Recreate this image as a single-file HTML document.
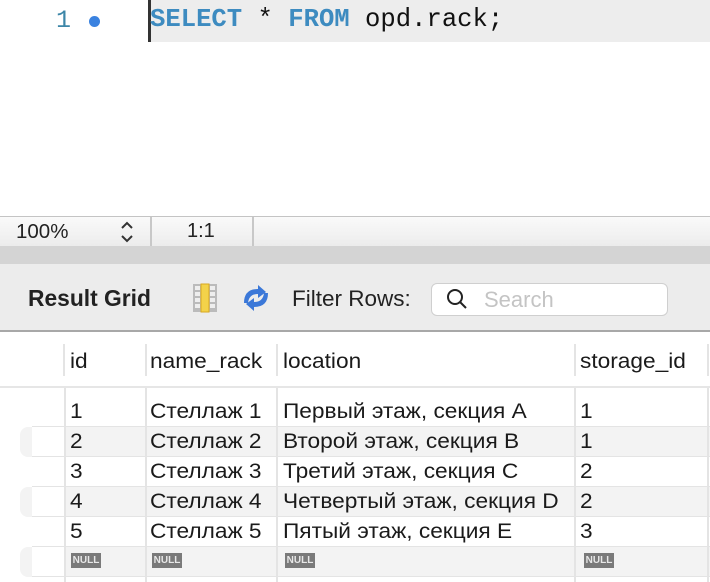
<!DOCTYPE html>
<html><head><meta charset="utf-8"><style>
*{margin:0;padding:0;box-sizing:border-box}
body{width:710px;height:582px;position:relative;background:#fff;overflow:hidden;font-family:"Liberation Sans",sans-serif}
.a{position:absolute}
.mono{font-family:"Liberation Mono",monospace}
.t{position:absolute;font-size:21.5px;color:#1a1a1a;line-height:30px;white-space:nowrap;transform:scaleX(1.055);transform-origin:0 0}
.null{position:absolute;background:#7a7a7a;color:#e8e8e8;font-size:10px;font-weight:bold;width:30px;height:15px;line-height:15px;text-align:center}
</style></head><body>
<div class="a" style="left:150px;top:0;width:560px;height:42px;background:#ededed"></div>
<div class="a" style="left:148px;top:0;width:3px;height:42px;background:#333"></div>
<div class="a mono" style="left:56px;top:6px;font-size:25px;color:#3d86a8">1</div>
<div class="a" style="left:89px;top:16px;width:11px;height:11px;border-radius:50%;background:#3a82e0"></div>
<div class="a mono" style="left:150px;top:5px;font-size:25.6px;white-space:pre;color:#111"><span style="color:#3d8bc0;font-weight:bold">SELECT</span> * <span style="color:#3d8bc0;font-weight:bold">FROM</span> opd.rack;</div>
<div class="a" style="left:0;top:216px;width:710px;height:30px;background:linear-gradient(#fafafa,#ececec);border-top:1px solid #c4c4c4"></div>
<div class="a" style="left:16px;top:220px;font-size:20.5px;color:#222">100%</div>
<svg class="a" style="left:119px;top:220px" width="16" height="24"><path d="M3 8 L8 3 L13 8 M3 16 L8 21 L13 16" fill="none" stroke="#333" stroke-width="2"/></svg>
<div class="a" style="left:150px;top:217px;width:2px;height:29px;background:#c8c8c8"></div>
<div class="a" style="left:187px;top:220px;font-size:20px;color:#222">1:1</div>
<div class="a" style="left:252px;top:217px;width:2px;height:29px;background:#c8c8c8"></div>
<div class="a" style="left:0;top:246px;width:710px;height:18px;background:#d4d4d4"></div>
<div class="a" style="left:0;top:264px;width:710px;height:66px;background:#ececec"></div>
<div class="a" style="left:28px;top:285px;font-size:22.8px;font-weight:bold;color:#222">Result Grid</div>
<svg class="a" style="left:192px;top:283px" width="26" height="30"><rect x="1" y="1" width="24" height="28" fill="#bbb"/><rect x="3" y="3" width="5" height="4" fill="#eee"/><rect x="3" y="9" width="5" height="4" fill="#eee"/><rect x="3" y="15" width="5" height="4" fill="#eee"/><rect x="3" y="21" width="5" height="4" fill="#eee"/><rect x="18" y="3" width="5" height="4" fill="#eee"/><rect x="18" y="9" width="5" height="4" fill="#eee"/><rect x="18" y="15" width="5" height="4" fill="#eee"/><rect x="18" y="21" width="5" height="4" fill="#eee"/><rect x="9" y="1" width="8" height="28" fill="#f3d34a" stroke="#d8a820"/></svg>
<svg class="a" style="left:240px;top:283px" width="32" height="30" viewBox="0 0 32 30"><path d="M4 20 Q4 6 18 6 L18 2 L26 9 L18 15 L18 11 Q9 11 8 20 Z" fill="#3b78d8"/><path d="M28 10 Q28 24 14 24 L14 28 L6 21 L14 15 L14 19 Q23 19 24 10 Z" fill="#3b78d8"/></svg>
<div class="a" style="left:292px;top:286px;font-size:22.5px;color:#222">Filter Rows:</div>
<div class="a" style="left:431px;top:283px;width:237px;height:33px;background:#fff;border:1px solid #cfcfcf;border-radius:6px"></div>
<svg class="a" style="left:446px;top:288px" width="22" height="22"><circle cx="9" cy="9" r="7" fill="none" stroke="#222" stroke-width="2"/><line x1="14" y1="14" x2="20" y2="20" stroke="#222" stroke-width="2"/></svg>
<div class="a" style="left:484px;top:287px;font-size:22px;color:#c4c4c4">Search</div>
<div class="a" style="left:0;top:330px;width:710px;height:2px;background:#a8a8a8"></div>
<div class="a" style="left:63px;top:344px;width:2px;height:32px;background:#e4e4e4"></div>
<div class="a" style="left:145px;top:344px;width:2px;height:32px;background:#e4e4e4"></div>
<div class="a" style="left:276px;top:344px;width:2px;height:32px;background:#e4e4e4"></div>
<div class="a" style="left:574px;top:344px;width:2px;height:32px;background:#e4e4e4"></div>
<div class="a" style="left:707px;top:344px;width:2px;height:32px;background:#e4e4e4"></div>
<div class="t" style="left:70px;top:346px">id</div>
<div class="t" style="left:150px;top:346px">name_rack</div>
<div class="t" style="left:283px;top:346px">location</div>
<div class="t" style="left:580px;top:346px">storage_id</div>
<div class="a" style="left:0;top:386px;width:710px;height:2px;background:#e6e6e6"></div>
<div class="a" style="left:20px;top:427px;width:690px;height:30px;background:#f3f3f3;border-radius:8px 0 0 8px"></div>
<div class="a" style="left:20px;top:487px;width:690px;height:30px;background:#f3f3f3;border-radius:8px 0 0 8px"></div>
<div class="a" style="left:20px;top:547px;width:690px;height:30px;background:#f3f3f3;border-radius:8px 0 0 8px"></div>
<div class="a" style="left:32px;top:427px;width:32px;height:30px;background:#fff"></div>
<div class="a" style="left:32px;top:487px;width:32px;height:30px;background:#fff"></div>
<div class="a" style="left:32px;top:547px;width:32px;height:30px;background:#fff"></div>
<div class="a" style="left:32px;top:426px;width:678px;height:1px;background:#e4e4e4"></div>
<div class="a" style="left:32px;top:456px;width:678px;height:1px;background:#e4e4e4"></div>
<div class="a" style="left:32px;top:486px;width:678px;height:1px;background:#e4e4e4"></div>
<div class="a" style="left:32px;top:516px;width:678px;height:1px;background:#e4e4e4"></div>
<div class="a" style="left:32px;top:546px;width:678px;height:1px;background:#e4e4e4"></div>
<div class="a" style="left:32px;top:576px;width:678px;height:1px;background:#e4e4e4"></div>
<div class="a" style="left:64px;top:388px;width:2px;height:194px;background:#e4e4e4"></div>
<div class="a" style="left:145px;top:388px;width:2px;height:194px;background:#e4e4e4"></div>
<div class="a" style="left:276px;top:388px;width:2px;height:194px;background:#e4e4e4"></div>
<div class="a" style="left:574px;top:388px;width:2px;height:194px;background:#e4e4e4"></div>
<div class="a" style="left:707px;top:388px;width:2px;height:194px;background:#e4e4e4"></div>
<div class="t" style="left:70px;top:396px">1</div><div class="t" style="left:150px;top:396px">Стеллаж 1</div><div class="t" style="left:283px;top:396px">Первый этаж, секция A</div><div class="t" style="left:580px;top:396px">1</div>
<div class="t" style="left:70px;top:426px">2</div><div class="t" style="left:150px;top:426px">Стеллаж 2</div><div class="t" style="left:283px;top:426px">Второй этаж, секция B</div><div class="t" style="left:580px;top:426px">1</div>
<div class="t" style="left:70px;top:456px">3</div><div class="t" style="left:150px;top:456px">Стеллаж 3</div><div class="t" style="left:283px;top:456px">Третий этаж, секция C</div><div class="t" style="left:580px;top:456px">2</div>
<div class="t" style="left:70px;top:486px">4</div><div class="t" style="left:150px;top:486px">Стеллаж 4</div><div class="t" style="left:283px;top:486px">Четвертый этаж, секция D</div><div class="t" style="left:580px;top:486px">2</div>
<div class="t" style="left:70px;top:516px">5</div><div class="t" style="left:150px;top:516px">Стеллаж 5</div><div class="t" style="left:283px;top:516px">Пятый этаж, секция E</div><div class="t" style="left:580px;top:516px">3</div>
<div class="null" style="left:71px;top:553px">NULL</div>
<div class="null" style="left:152px;top:553px">NULL</div>
<div class="null" style="left:285px;top:553px">NULL</div>
<div class="null" style="left:584px;top:553px">NULL</div>
</body></html>
